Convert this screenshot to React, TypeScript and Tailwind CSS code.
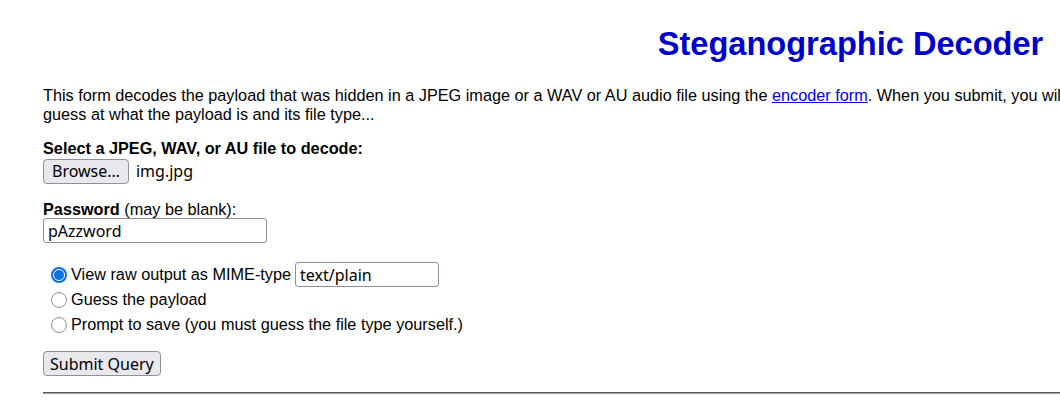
import React from "react";

function Radio({ checked }: { checked?: boolean }) {
  if (checked) {
    return (
      <span className="w-[16px] h-[16px] rounded-full bg-[#0b6fe4] flex items-center justify-center shrink-0">
        <span className="w-[12px] h-[12px] rounded-full border border-white bg-[#0b6fe4]" />
      </span>
    );
  }
  return <span className="w-[16px] h-[16px] rounded-full border border-[#8f8f9d] bg-white shrink-0" />;
}

export default function App() {
  return (
    <div className="w-[1060px] h-[407px] overflow-hidden bg-white font-['Liberation_Sans',Arial,sans-serif] text-[16.25px] leading-[18.5px] text-black">
      <div className="ml-[43px] w-[1615px]">
        {/* Title */}
        <h1 className="pt-[25px] text-center text-[32.6px] leading-[37px] font-bold text-[#0000cc]">
          Steganographic Decoder
        </h1>

        <p className="mt-[24px]">
          This form decodes the payload that was hidden in a JPEG image or a WAV or AU audio file using the{" "}
          <a href="#" className="text-[#0000ee] underline">encoder form</a>. When you submit, you will be shown the raw output, or the decoder will make a
          <br />
          guess at what the payload is and its file type...
        </p>

        <form className="mt-[16px]">
          {/* File */}
          <div className="font-bold">Select a JPEG, WAV, or AU file to decode:</div>
          <div className="mt-[1px] flex items-center gap-[7px] font-['Noto_Sans',sans-serif] text-[16px]">
            <button type="button" className="h-[25px] px-[8px] rounded-[4px] border border-[#8f8f9d] bg-[#e9e9ed] leading-none">
              Browse…
            </button>
            <span>img.jpg</span>
          </div>

          {/* Password */}
          <div className="mt-[16px]">
            <span className="font-bold">Password</span> (may be blank):
          </div>
          <input
            type="text"
            defaultValue="pAzzword"
            className="block w-[224px] h-[25px] px-[4px] border border-[#8f8f9d] rounded-[3px] font-['Noto_Sans',sans-serif] text-[16px] outline-none"
          />

          {/* Output options */}
          <div className="mt-[19px] ml-[8px]">
            <div className="h-[25px] flex items-center gap-[4px]">
              <Radio checked />
              <span>View raw output as MIME-type</span>
              <input
                type="text"
                defaultValue="text/plain"
                className="w-[144px] h-[25px] px-[4px] border border-[#8f8f9d] rounded-[3px] font-['Noto_Sans',sans-serif] text-[16px] outline-none"
              />
            </div>
            <div className="h-[25px] flex items-center gap-[4px]">
              <Radio />
              <span>Guess the payload</span>
            </div>
            <div className="h-[25px] flex items-center gap-[4px]">
              <Radio />
              <span>Prompt to save (you must guess the file type yourself.)</span>
            </div>
          </div>

          <button
            type="button"
            className="mt-[14px] h-[25px] px-[6px] rounded-[4px] border border-[#8f8f9d] bg-[#e9e9ed] font-['Noto_Sans',sans-serif] text-[16px] leading-none"
          >
            Submit Query
          </button>
        </form>

        <hr className="mt-[16px] border-t border-t-[#5a5a5a] border-b border-b-[#a0a0a0]" />
      </div>
    </div>
  );
}
